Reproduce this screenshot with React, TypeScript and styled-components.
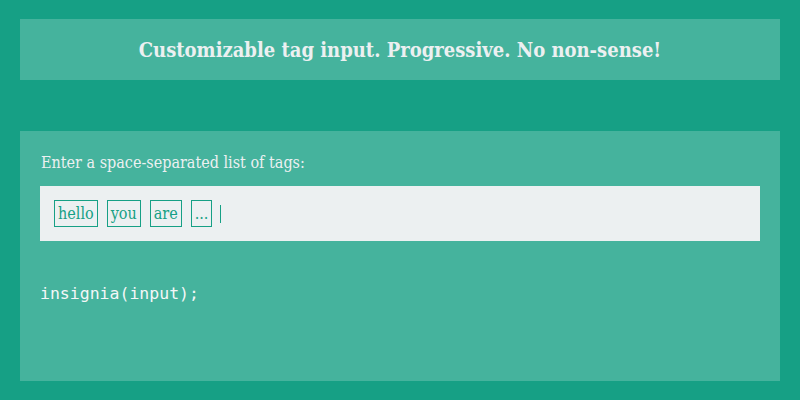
import React from "react";
import styled, { createGlobalStyle } from "styled-components";

const Global = createGlobalStyle`
  html, body { margin: 0; padding: 0; background: #16a085; }
  body { font-family: "DejaVu Serif Condensed", "DejaVu Serif", serif; color: #ecf0f1; }
`;

const Page = styled.div`
  padding: 19px 20px;
  display: flex;
  flex-direction: column;
  gap: 51px;
  width: 760px;
`;

const Header = styled.header`
  height: 61px;
  background: #45b39d;
  display: flex;
  align-items: center;
  justify-content: center;
`;

const Title = styled.h1`
  margin: 0;
  font-size: 20px;
  font-weight: bold;
`;

const Panel = styled.section`
  height: 250px;
  box-sizing: border-box;
  background: #45b39d;
  padding: 22px 20px;
  display: flex;
  flex-direction: column;
`;

const Label = styled.label`
  font-size: 16px;
  line-height: 20px;
  margin-left: 1px;
`;

const InputBox = styled.div`
  margin-top: 13px;
  height: 55px;
  background: #ecf0f1;
  display: flex;
  align-items: center;
  padding: 0 14px;
  gap: 9px;
`;

const Tag = styled.span`
  border: 1px solid #16a085;
  color: #16a085;
  font-size: 16px;
  line-height: 25px;
  padding: 0 3px;
`;

const Caret = styled.span`
  width: 1px;
  height: 18px;
  background: #16a085;
  margin-left: -1px;
`;

const Code = styled.pre`
  margin: 43px 0 0;
  font-family: "DejaVu Sans Mono", "Liberation Mono", monospace;
  font-size: 16.5px;
  color: #f4f7f7;
`;

export default function App() {
  return (
    <>
      <Global />
      <Page>
        <Header>
          <Title>Customizable tag input. Progressive. No non-sense!</Title>
        </Header>
        <Panel>
          <Label>Enter a space-separated list of tags:</Label>
          <InputBox>
            {["hello", "you", "are", "..."].map((t) => (
              <Tag key={t}>{t}</Tag>
            ))}
            <Caret />
          </InputBox>
          <Code>insignia(input);</Code>
        </Panel>
      </Page>
    </>
  );
}
